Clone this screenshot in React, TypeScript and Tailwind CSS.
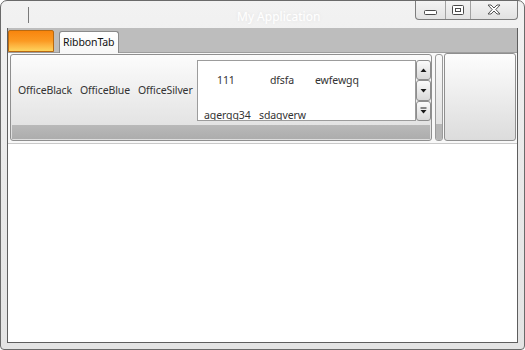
const font = { fontFamily: '"Noto Sans", "Open Sans", "Liberation Sans", sans-serif' };

function CaptionButtons() {
  return (
    <div className="flex h-[20px] w-[103px] -mt-px rounded-b-[4px] border border-t-0 border-[#7d7d7d] bg-gradient-to-b from-[#f4f4f4] to-[#e2e2e2]">
      <div className="flex w-[30px] items-end justify-center pb-[4px] border-r border-[#a2a2a2]">
        <svg width="13" height="5" viewBox="0 0 13 5">
          <rect x="0.5" y="0.5" width="12" height="4" rx="1" fill="#fff" stroke="#4a4a4a" />
        </svg>
      </div>
      <div className="flex w-[25px] items-center justify-center border-r border-[#a2a2a2]">
        <svg width="12" height="10" viewBox="0 0 12 10">
          <rect x="0.5" y="0.5" width="11" height="9" rx="1" fill="#fff" stroke="#4a4a4a" />
          <rect x="3.5" y="3.5" width="5" height="3" fill="#fff" stroke="#4a4a4a" />
        </svg>
      </div>
      <div className="flex flex-1 items-center justify-center">
        <svg width="14" height="11" viewBox="0 0 14 11">
          <path
            d="M1 1 H4 L7 4 L10 1 H13 L8.8 5.5 L13 10 H10 L7 7 L4 10 H1 L5.2 5.5 Z"
            fill="#fff"
            stroke="#555"
            strokeWidth="1"
            strokeLinejoin="round"
          />
        </svg>
      </div>
    </div>
  );
}

function ScrollButton({ kind }: { kind: "up" | "down" | "more" }) {
  return (
    <div className="flex flex-1 items-center justify-center rounded-[3px] border border-[#8d8d8d] bg-gradient-to-b from-[#fbfbfb] to-[#d9d9d9]">
      <svg width="7" height="7" viewBox="0 0 7 7">
        {kind === "up" && <path d="M0.5 5 L3.5 1.5 L6.5 5 Z" fill="#1a1a1a" />}
        {kind === "down" && <path d="M0.5 2 L3.5 5.5 L6.5 2 Z" fill="#1a1a1a" />}
        {kind === "more" && (
          <>
            <rect x="0.5" y="0.5" width="6" height="1" fill="#1a1a1a" />
            <path d="M0.5 3 L3.5 6.5 L6.5 3 Z" fill="#1a1a1a" />
          </>
        )}
      </svg>
    </div>
  );
}

function Gallery() {
  return (
    <div className="mt-[5px] flex h-[61px] flex-1">
      <div className="flex-1 overflow-hidden border border-[#9c9c9c] bg-white pt-[2px] text-[10.5px] tracking-[-0.1px] text-[#333]">
        <div className="flex h-[35px] items-center">
          <span className="w-[72px] pl-[19px]">111</span>
          <span className="w-[45px]">dfsfa</span>
          <span>ewfewgq</span>
        </div>
        <div className="flex h-[35px] items-center">
          <span className="w-[61px] pl-[6px]">agergg34</span>
          <span>sdagverw</span>
        </div>
      </div>
      <div className="flex w-[15px] flex-col">
        <ScrollButton kind="up" />
        <ScrollButton kind="down" />
        <ScrollButton kind="more" />
      </div>
    </div>
  );
}

export default function App() {
  return (
    <div
      className="flex h-[350px] w-[525px] flex-col overflow-hidden rounded-t-[7px] rounded-b-[4px] border border-[#6a6a6a] bg-gradient-to-b from-[#f2f2f2] via-[#e9e9e9] to-[#e4e4e4]"
      style={font}
    >
      {/* title bar */}
      <div className="flex h-[27px] items-start pr-[6px]">
        <div className="ml-[27px] mt-[6px] h-[16px] w-px bg-[#7a7a7a]" />
        <div className="flex flex-1 items-center pt-[7px]">
          <span className="ml-[208px] text-[12px] text-white [text-shadow:0_0_4px_rgba(0,0,0,0.08)]">
            My Application
          </span>
        </div>
        <CaptionButtons />
      </div>

      {/* client */}
      <div className="mx-[6px] mb-[6px] flex flex-1 flex-col border-x border-b border-[#5e5e5e] bg-white">
        {/* tab row */}
        <div className="flex h-[24px] items-end bg-[#bdbdbd]">
          <div className="h-[22px] w-[46px] rounded-t-[2px] border border-[#b86a12] bg-gradient-to-b from-[#f8850c] via-[#fb9a22] to-[#fdd35c]" />
          <div className="relative z-10 -mb-px ml-[5px] flex h-[22px] w-[60px] items-center rounded-t-[3px] border border-b-0 border-[#8a8a8a] bg-gradient-to-b from-white to-[#f7f7f7] pl-[3px] text-[10.5px] tracking-[-0.1px] text-[#111]">
            RibbonTab
          </div>
        </div>

        {/* ribbon */}
        <div className="flex h-[91px] border-t border-[#9e9e9e] bg-[#f8f8f8] pl-[2px] pr-px pt-px">
          {/* group 1 */}
          <div className="flex h-[87px] w-[423px] flex-col rounded-[3px] border border-[#8f8f8f] bg-gradient-to-b from-[#fcfcfc] to-[#dedede]">
            <div className="flex h-[70px] text-[10.5px] tracking-[-0.1px] text-[#333]">
              <div className="flex items-center pl-[7px] pt-[2px]">
                <span className="w-[62px]">OfficeBlack</span>
                <span className="w-[58px]">OfficeBlue</span>
                <span className="w-[59px]">OfficeSilver</span>
              </div>
              <Gallery />
            </div>
            <div className="mx-px h-[14px] bg-gradient-to-b from-[#b9b9b9] to-[#adadad]" />
          </div>

          {/* separator */}
          <div className="ml-[3px] flex h-[87px] w-[8px] flex-col overflow-hidden rounded-[3px] border border-[#9a9a9a] bg-gradient-to-b from-[#fafafa] to-[#dcdcdc]">
            <div className="flex-1" />
            <div className="h-[16px] bg-[#b6b6b6]" />
          </div>

          {/* group 2 */}
          <div className="ml-px h-[88px] w-[72px] -mt-px rounded-[3px] border border-[#8f8f8f] bg-gradient-to-b from-[#fdfdfd] to-[#dcdcdc]" />
        </div>

        {/* content */}
        <div className="flex-1 border-t border-[#c9c9c9] bg-white" />
      </div>
    </div>
  );
}
